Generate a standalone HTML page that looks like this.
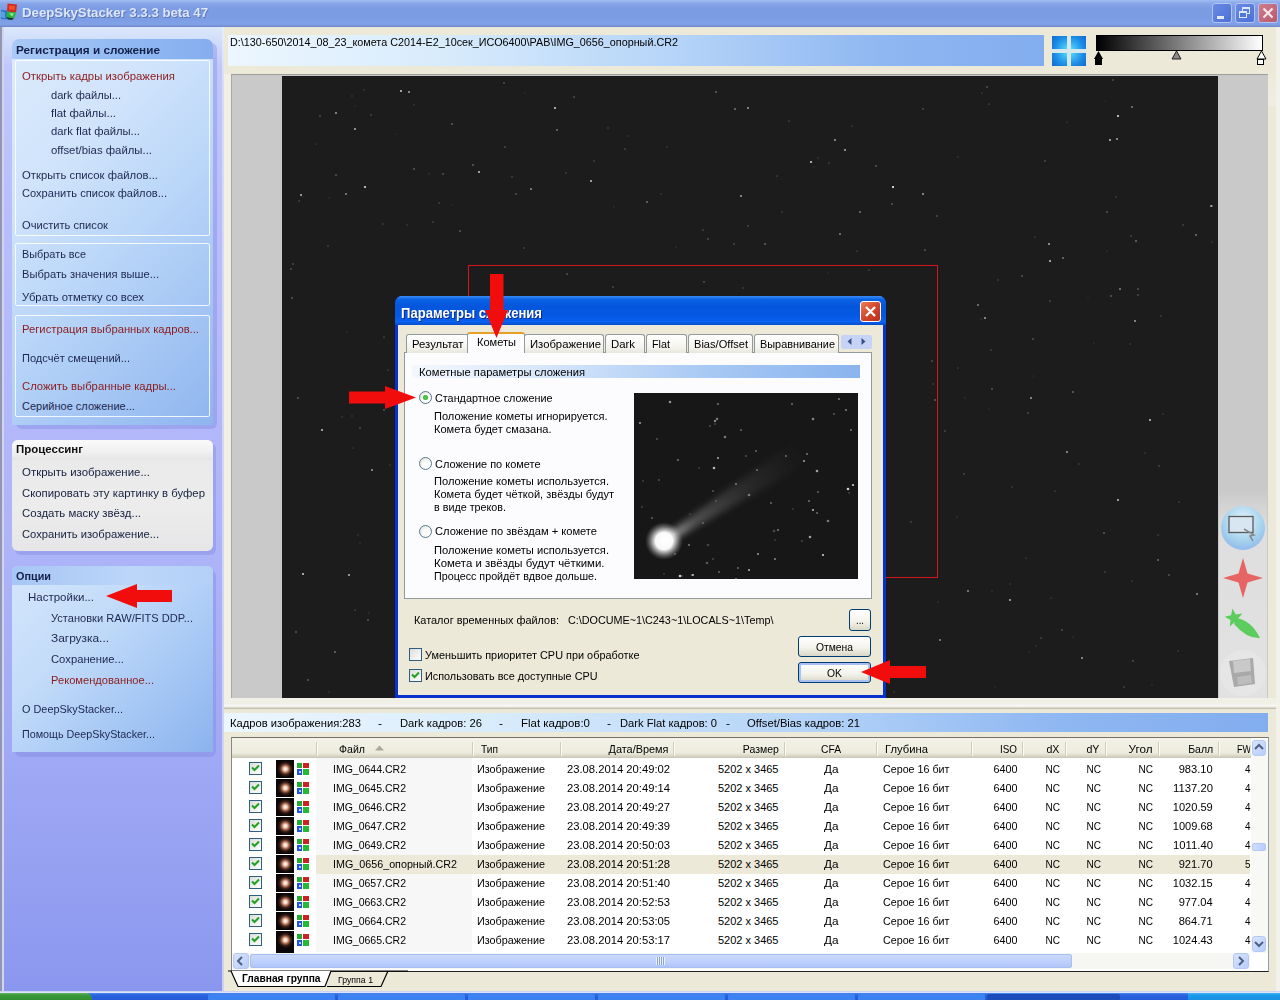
<!DOCTYPE html>
<html><head><meta charset="utf-8"><title>DeepSkyStacker</title><style>
*{box-sizing:border-box;margin:0;padding:0}
html,body{width:1280px;height:1000px;overflow:hidden;background:#ece9d8}
body{font-family:"Liberation Sans",sans-serif;font-size:11px;color:#000;position:relative}
.a{position:absolute}
.t{position:absolute;white-space:nowrap;transform-origin:0 50%}
#title{left:0;top:0;width:1280px;height:27px;background:linear-gradient(#a2bdf0 0,#8aa9ea 3px,#7c9ce4 8px,#7b9be3 18px,#80a1e8 23px,#7e9de2 25px,#6c84c6 27px)}
.wb{position:absolute;top:3px;width:20px;height:20px;border:1px solid #b4c4f0;border-radius:3px}
#side{left:0;top:27px;width:222px;height:966px;background:linear-gradient(#dbe8fb 0,#d3e0fa 10px,#c0c8fb 40px,#b8bdfb 200px,#aeb4f8 520px,#9fa8f4 740px,#909cf0 900px,#8b97ee 966px)}
.sb{position:absolute;left:15px;width:195px;border:1px solid rgba(255,255,255,.85);border-radius:2px}
</style></head><body>
<div class="a" id="title">
<svg class="a" style="left:0px;top:2px" width="20" height="20" viewBox="0 0 20 20"><path d="M1 8 L7 8.5 L8 17.5 L1 17Z" fill="#2a74c8"/><path d="M2 9.5v6M4 10v6" stroke="#7fd0f0" stroke-width="1"/><path d="M7.5 1.5 L17 2.5 L16 10.5 L7 9.5Z" fill="#d22a1e"/><path d="M9 3.5 L15 4 L14.5 8 L9 7.5Z" fill="#f0502a"/><path d="M7 9.5 L16 10.5 L14 16.5 L6.5 15Z" fill="#28b43a"/><path d="M9 11 L14 11.5 L12 14.5Z" fill="#8cf08c"/><path d="M6.5 15 L14 16.5 L12 18 L8 17.5Z" fill="#143a28"/></svg>
<div class="t" style="top:5.32px;font-size:13.5px;line-height:16px;height:16px;left:22px;transform:scaleX(0.9796);color:#dde6f8;font-weight:bold;text-shadow:1px 1px 0 #5a74b8;">DeepSkyStacker 3.3.3 beta 47</div>
<div class="wb" style="left:1212px;background:linear-gradient(135deg,#6a8ae4,#4a70d8)"><div class="a" style="left:4px;top:12px;width:7px;height:3px;background:#e4ebfb"></div></div>
<div class="wb" style="left:1235px;background:linear-gradient(135deg,#6a8ae4,#4a70d8)"><div class="a" style="left:6px;top:3px;width:8px;height:7px;border:1px solid #dfe7fa;border-top-width:2px"></div><div class="a" style="left:3px;top:7px;width:8px;height:7px;border:1px solid #dfe7fa;border-top-width:2px;background:#5277da"></div></div>
<div class="wb" style="left:1258px;background:linear-gradient(135deg,#cf7c8c,#b85a6c)"><svg class="a" style="left:3px;top:3px" width="12" height="12"><path d="M1.5 1.5L10.5 10.5M10.5 1.5L1.5 10.5" stroke="#f4e6ea" stroke-width="2.2"/></svg></div>
</div>
<div class="a" style="left:0px;top:27px;width:3px;height:966px;background:#8496de"></div>
<div class="a" style="left:1276px;top:27px;width:4px;height:966px;background:#f3f2ea"></div>
<div class="a" id="side"></div>
<div class="a" style="left:0px;top:27px;width:2px;height:966px;background:#9296b4"></div>
<div class="a" style="left:2px;top:27px;width:2px;height:966px;background:#d0d4ec"></div>
<div class="a" style="left:16px;top:43px;width:201px;height:386px;background:rgba(120,130,220,.35);border-radius:6px"></div>
<div class="a" style="left:12px;top:39px;width:201px;height:386px;border-radius:7px 7px 0 0;background:linear-gradient(135deg,#dcebfc 0,#cfe3fb 30%,#b4d2f7 60%,#8fb5ef 100%)"></div>
<div class="a" style="left:12px;top:39px;width:201px;height:20px;border-radius:7px 7px 0 0;background:linear-gradient(90deg,#a9c9f6,#8fb8f2 60%,#86aeee)"></div>
<div class="t" style="top:43.02px;font-size:11.5px;line-height:14px;height:14px;left:15.5px;transform:scaleX(1.0239);color:#14204a;font-weight:bold;">Регистрация и сложение</div>
<div class="sb" style="top:60px;height:176px"></div>
<div class="sb" style="top:243px;height:63px"></div>
<div class="sb" style="top:315px;height:102px"></div>
<div class="t" style="top:69.69px;font-size:11px;line-height:13px;height:13px;left:22px;transform:scaleX(1.0317);color:#8c1c1c;">Открыть кадры изображения</div>
<div class="t" style="top:88.69px;font-size:11px;line-height:13px;height:13px;left:51px;transform:scaleX(1.0106);color:#1d2750;">dark файлы...</div>
<div class="t" style="top:106.69px;font-size:11px;line-height:13px;height:13px;left:51px;transform:scaleX(1.0392);color:#1d2750;">flat файлы...</div>
<div class="t" style="top:124.69px;font-size:11px;line-height:13px;height:13px;left:51px;transform:scaleX(1.0230);color:#1d2750;">dark flat файлы...</div>
<div class="t" style="top:143.69px;font-size:11px;line-height:13px;height:13px;left:51px;transform:scaleX(1.0326);color:#1d2750;">offset/bias файлы...</div>
<div class="t" style="top:168.69px;font-size:11px;line-height:13px;height:13px;left:22px;transform:scaleX(1.0268);color:#1d2750;">Открыть список файлов...</div>
<div class="t" style="top:186.69px;font-size:11px;line-height:13px;height:13px;left:22px;transform:scaleX(1.0075);color:#1d2750;">Сохранить список файлов...</div>
<div class="t" style="top:218.69px;font-size:11px;line-height:13px;height:13px;left:22px;transform:scaleX(1.0105);color:#1d2750;">Очистить список</div>
<div class="t" style="top:247.69px;font-size:11px;line-height:13px;height:13px;left:22px;transform:scaleX(0.9891);color:#1d2750;">Выбрать все</div>
<div class="t" style="top:267.69px;font-size:11px;line-height:13px;height:13px;left:22px;transform:scaleX(1.0125);color:#1d2750;">Выбрать значения выше...</div>
<div class="t" style="top:290.69px;font-size:11px;line-height:13px;height:13px;left:22px;transform:scaleX(1.0249);color:#1d2750;">Убрать отметку со всех</div>
<div class="t" style="top:322.69px;font-size:11px;line-height:13px;height:13px;left:22px;transform:scaleX(1.0225);color:#8c1c1c;">Регистрация выбранных кадров...</div>
<div class="t" style="top:351.69px;font-size:11px;line-height:13px;height:13px;left:22px;transform:scaleX(1.0067);color:#1d2750;">Подсчёт смещений...</div>
<div class="t" style="top:379.69px;font-size:11px;line-height:13px;height:13px;left:22px;transform:scaleX(1.0259);color:#8c1c1c;">Сложить выбранные кадры...</div>
<div class="t" style="top:399.69px;font-size:11px;line-height:13px;height:13px;left:22px;color:#1d2750;">Серийное сложение...</div>
<div class="a" style="left:15px;top:443px;width:201px;height:112px;background:rgba(120,130,220,.35);border-radius:6px"></div>
<div class="a" style="left:12px;top:440px;width:201px;height:111px;border-radius:6px;background:linear-gradient(#e9e9ea,#ececec 60%,#e6e6e8)"></div>
<div class="a" style="left:12px;top:440px;width:201px;height:20px;border-radius:6px 6px 0 0;background:linear-gradient(#fafafa,#f0f0f0 60%,#e4e4e6)"></div>
<div class="t" style="top:442.02px;font-size:11.5px;line-height:14px;height:14px;left:15.5px;transform:scaleX(0.9965);color:#101010;font-weight:bold;">Процессинг</div>
<div class="t" style="top:465.69px;font-size:11px;line-height:13px;height:13px;left:22px;transform:scaleX(1.0409);color:#16213f;">Открыть изображение...</div>
<div class="t" style="top:486.69px;font-size:11px;line-height:13px;height:13px;left:22px;transform:scaleX(1.0323);color:#16213f;">Скопировать эту картинку в буфер</div>
<div class="t" style="top:506.69px;font-size:11px;line-height:13px;height:13px;left:22px;transform:scaleX(1.0353);color:#16213f;">Создать маску звёзд...</div>
<div class="t" style="top:527.69px;font-size:11px;line-height:13px;height:13px;left:22px;transform:scaleX(1.0192);color:#16213f;">Сохранить изображение...</div>
<div class="a" style="left:15px;top:570px;width:201px;height:187px;background:rgba(120,130,220,.35);border-radius:6px"></div>
<div class="a" style="left:12px;top:566px;width:201px;height:186px;border-radius:6px 6px 0 0;background:linear-gradient(135deg,#d4e6fb 0,#c4dcf9 35%,#a9caf5 65%,#8cb3ee 100%)"></div>
<div class="a" style="left:12px;top:566px;width:201px;height:19px;border-radius:6px 6px 0 0;background:linear-gradient(90deg,#a6c6f5,#bcd6f8 60%,#b4d0f7)"></div>
<div class="t" style="top:569.02px;font-size:11.5px;line-height:14px;height:14px;left:15.5px;transform:scaleX(0.9432);color:#14204a;font-weight:bold;">Опции</div>
<div class="t" style="top:590.69px;font-size:11px;line-height:13px;height:13px;left:28px;transform:scaleX(1.0458);color:#1d2750;">Настройки...</div>
<div class="t" style="top:611.69px;font-size:11px;line-height:13px;height:13px;left:51px;transform:scaleX(1.0070);color:#1d2750;">Установки RAW/FITS DDP...</div>
<div class="t" style="top:631.69px;font-size:11px;line-height:13px;height:13px;left:51px;transform:scaleX(1.0810);color:#1d2750;">Загрузка...</div>
<div class="t" style="top:652.69px;font-size:11px;line-height:13px;height:13px;left:51px;transform:scaleX(1.0228);color:#1d2750;">Сохранение...</div>
<div class="t" style="top:673.69px;font-size:11px;line-height:13px;height:13px;left:51px;transform:scaleX(1.0126);color:#8c1c1c;">Рекомендованное...</div>
<div class="t" style="top:702.69px;font-size:11px;line-height:13px;height:13px;left:22px;transform:scaleX(0.9891);color:#1d2750;">О DeepSkyStacker...</div>
<div class="t" style="top:727.69px;font-size:11px;line-height:13px;height:13px;left:22px;transform:scaleX(0.9777);color:#1d2750;">Помощь DeepSkyStacker...</div>
<svg class="a" style="left:104px;top:582px" width="72" height="28"><path d="M2 14 L33 2 L33 8 L68 8 L68 20 L33 20 L33 26 Z" fill="#f20d0d"/></svg>
<div class="a" style="left:222px;top:27px;width:2px;height:964px;background:linear-gradient(#e6eefb,#d6daf6 60px,#cdd0f2)"></div>
<div class="a" style="left:228px;top:35px;width:816px;height:31px;background:linear-gradient(90deg,#ecf6fe 0,#d9ecfc 25%,#b5d4f8 55%,#8fb7f1 80%,#82adef 100%)"></div>
<div class="t" style="top:35.69px;font-size:11px;line-height:13px;height:13px;left:230px;transform:scaleX(0.9810);">D:\130-650\2014_08_23_комета C2014-E2_10сек_ИСО6400\РАВ\IMG_0656_опорный.CR2</div>
<div class="a" style="left:1052px;top:36px;width:15px;height:13px;background:radial-gradient(circle at 100% 100%,#52d6fb,#1c8ce6 60%,#1268d0)"></div>
<div class="a" style="left:1071px;top:36px;width:15px;height:13px;background:radial-gradient(circle at 0 100%,#52d6fb,#1c8ce6 60%,#1268d0)"></div>
<div class="a" style="left:1052px;top:53px;width:15px;height:13px;background:radial-gradient(circle at 100% 0,#52d6fb,#1c8ce6 60%,#1268d0)"></div>
<div class="a" style="left:1071px;top:53px;width:15px;height:13px;background:radial-gradient(circle at 0 0,#52d6fb,#1c8ce6 60%,#1268d0)"></div>
<div class="a" style="left:1067px;top:36px;width:4px;height:30px;background:rgba(200,232,250,.6)"></div>
<div class="a" style="left:1052px;top:49px;width:34px;height:4px;background:rgba(200,232,250,.6)"></div>
<div class="a" style="left:1096px;top:35px;width:167px;height:16px;border:1px solid #000;background:linear-gradient(90deg,#000,#fff)"></div>
<svg class="a" style="left:1090px;top:50px" width="180" height="16"><path d="M8.5 1 L4 9 L13 9Z" fill="#000"/><rect x="5" y="9" width="7" height="6" fill="#000"/><path d="M86.5 1 L82 9 L91 9Z" fill="#888" stroke="#222" stroke-width="1"/><path d="M171.5 1 L167 9 L176 9Z" fill="#fff" stroke="#000" stroke-width="1"/><rect x="167.5" y="9.5" width="6" height="5" fill="#fff" stroke="#000" stroke-width="1"/></svg>
<div class="a" style="left:224px;top:66px;width:1052px;height:40px;background:linear-gradient(#ece9d8,#f0eee2)"></div>
<div class="a" style="left:224px;top:74px;width:8px;height:632px;background:#f2f0e5"></div>
<div class="a" style="left:224px;top:698px;width:1052px;height:8px;background:#f1f0e6"></div>
<div class="a" style="left:231px;top:74px;width:1037px;height:624px;background:#c9c9c9;border-top:1px solid #9d9d9d;border-left:1px solid #a8a8a8"></div>
<div class="a" style="left:282px;top:76px;width:936px;height:622px;background:#1c1c1c;overflow:hidden">
<svg class="a" style="left:0;top:0" width="936" height="623"><circle cx="119" cy="15" r="1.0" fill="#fff" opacity="0.80"/><circle cx="127" cy="16" r="1.0" fill="#fff" opacity="0.63"/><circle cx="54" cy="37" r="1.1" fill="#fff" opacity="0.53"/><circle cx="73" cy="53" r="1.1" fill="#fff" opacity="0.64"/><circle cx="273" cy="32" r="1.1" fill="#fff" opacity="0.77"/><circle cx="275" cy="54" r="0.8" fill="#fff" opacity="0.63"/><circle cx="191" cy="89" r="0.8" fill="#fff" opacity="0.49"/><circle cx="197" cy="96" r="1.1" fill="#fff" opacity="0.70"/><circle cx="83" cy="111" r="1.1" fill="#fff" opacity="0.84"/><circle cx="19" cy="119" r="1.0" fill="#fff" opacity="0.71"/><circle cx="309" cy="105" r="1.1" fill="#fff" opacity="0.71"/><circle cx="64" cy="118" r="1.1" fill="#fff" opacity="0.46"/><circle cx="249" cy="113" r="1.1" fill="#fff" opacity="0.48"/><circle cx="434" cy="16" r="0.8" fill="#fff" opacity="0.53"/><circle cx="453" cy="33" r="0.8" fill="#fff" opacity="0.69"/><circle cx="466" cy="32" r="1.0" fill="#fff" opacity="0.58"/><circle cx="529" cy="86" r="1.1" fill="#fff" opacity="0.79"/><circle cx="553" cy="64" r="1.1" fill="#fff" opacity="0.54"/><circle cx="563" cy="74" r="1.0" fill="#fff" opacity="0.65"/><circle cx="611" cy="111" r="1.1" fill="#fff" opacity="0.48"/><circle cx="641" cy="118" r="1.1" fill="#fff" opacity="0.56"/><circle cx="836" cy="40" r="1.1" fill="#fff" opacity="0.85"/><circle cx="850" cy="31" r="0.8" fill="#fff" opacity="0.73"/><circle cx="828" cy="64" r="1.0" fill="#fff" opacity="0.75"/><circle cx="459" cy="120" r="1.1" fill="#fff" opacity="0.57"/><circle cx="578" cy="136" r="0.8" fill="#fff" opacity="0.68"/><circle cx="365" cy="126" r="0.8" fill="#fff" opacity="0.61"/><circle cx="929" cy="130" r="1.0" fill="#fff" opacity="0.60"/><circle cx="558" cy="158" r="0.8" fill="#fff" opacity="0.79"/><circle cx="483" cy="168" r="0.8" fill="#fff" opacity="0.54"/><circle cx="854" cy="165" r="0.8" fill="#fff" opacity="0.64"/><circle cx="767" cy="168" r="1.1" fill="#fff" opacity="0.61"/><circle cx="781" cy="182" r="0.8" fill="#fff" opacity="0.68"/><circle cx="838" cy="213" r="0.8" fill="#fff" opacity="0.76"/><circle cx="853" cy="245" r="1.0" fill="#fff" opacity="0.58"/><circle cx="785" cy="376" r="1.0" fill="#fff" opacity="0.58"/><circle cx="836" cy="424" r="1.0" fill="#fff" opacity="0.75"/><circle cx="822" cy="457" r="0.8" fill="#fff" opacity="0.50"/><circle cx="686" cy="515" r="1.1" fill="#fff" opacity="0.49"/><circle cx="876" cy="484" r="0.8" fill="#fff" opacity="0.64"/><circle cx="915" cy="518" r="1.0" fill="#fff" opacity="0.52"/><circle cx="800" cy="582" r="1.1" fill="#fff" opacity="0.53"/><circle cx="90" cy="394" r="1.1" fill="#fff" opacity="0.53"/><circle cx="21" cy="498" r="1.1" fill="#fff" opacity="0.76"/><circle cx="67" cy="499" r="1.0" fill="#fff" opacity="0.71"/><circle cx="53" cy="576" r="0.8" fill="#fff" opacity="0.61"/><circle cx="86" cy="544" r="0.8" fill="#fff" opacity="0.45"/><circle cx="749" cy="322" r="1.1" fill="#fff" opacity="0.57"/><circle cx="791" cy="316" r="0.8" fill="#fff" opacity="0.53"/><circle cx="611" cy="111" r="1.0" fill="#fff" opacity="0.85"/><circle cx="768" cy="185" r="1.1" fill="#fff" opacity="0.71"/><circle cx="829" cy="220" r="0.8" fill="#fff" opacity="0.47"/><circle cx="930" cy="130" r="0.8" fill="#fff" opacity="0.54"/><circle cx="696" cy="229" r="1.0" fill="#fff" opacity="0.45"/><circle cx="703" cy="242" r="1.1" fill="#fff" opacity="0.58"/><circle cx="835" cy="63" r="1.0" fill="#fff" opacity="0.60"/><circle cx="16" cy="322" r="0.8" fill="#fff" opacity="0.49"/><circle cx="40" cy="354" r="1.1" fill="#fff" opacity="0.70"/><circle cx="914" cy="159" r="0.8" fill="#fff" opacity="0.69"/><circle cx="728" cy="524" r="1.0" fill="#fff" opacity="0.70"/><circle cx="658" cy="564" r="0.8" fill="#fff" opacity="0.83"/><circle cx="868" cy="344" r="1.0" fill="#fff" opacity="0.78"/><circle cx="587" cy="194" r="0.6" fill="#fff" opacity="0.44"/><circle cx="234" cy="118" r="0.8" fill="#fff" opacity="0.37"/><circle cx="73" cy="30" r="0.6" fill="#fff" opacity="0.16"/><circle cx="901" cy="149" r="0.8" fill="#fff" opacity="0.29"/><circle cx="870" cy="609" r="0.6" fill="#fff" opacity="0.23"/><circle cx="575" cy="175" r="0.6" fill="#fff" opacity="0.41"/><circle cx="65" cy="256" r="0.6" fill="#fff" opacity="0.17"/><circle cx="536" cy="82" r="0.7" fill="#fff" opacity="0.20"/><circle cx="422" cy="206" r="0.8" fill="#fff" opacity="0.39"/><circle cx="547" cy="87" r="0.6" fill="#fff" opacity="0.47"/><circle cx="292" cy="21" r="0.8" fill="#fff" opacity="0.37"/><circle cx="70" cy="340" r="0.8" fill="#fff" opacity="0.17"/><circle cx="876" cy="459" r="0.6" fill="#fff" opacity="0.43"/><circle cx="856" cy="219" r="0.8" fill="#fff" opacity="0.32"/><circle cx="73" cy="534" r="0.6" fill="#fff" opacity="0.45"/><circle cx="570" cy="50" r="0.8" fill="#fff" opacity="0.19"/><circle cx="650" cy="285" r="0.7" fill="#fff" opacity="0.44"/><circle cx="78" cy="467" r="0.6" fill="#fff" opacity="0.26"/><circle cx="82" cy="14" r="0.8" fill="#fff" opacity="0.19"/><circle cx="730" cy="411" r="0.7" fill="#fff" opacity="0.24"/><circle cx="11" cy="188" r="0.8" fill="#fff" opacity="0.36"/><circle cx="466" cy="150" r="0.7" fill="#fff" opacity="0.38"/><circle cx="754" cy="570" r="0.6" fill="#fff" opacity="0.28"/><circle cx="546" cy="197" r="0.6" fill="#fff" opacity="0.20"/><circle cx="38" cy="40" r="0.7" fill="#fff" opacity="0.44"/><circle cx="106" cy="294" r="0.6" fill="#fff" opacity="0.44"/><circle cx="629" cy="446" r="0.8" fill="#fff" opacity="0.31"/><circle cx="70" cy="20" r="0.8" fill="#fff" opacity="0.16"/><circle cx="663" cy="355" r="0.7" fill="#fff" opacity="0.38"/><circle cx="379" cy="118" r="0.7" fill="#fff" opacity="0.23"/><circle cx="132" cy="29" r="0.8" fill="#fff" opacity="0.19"/><circle cx="102" cy="334" r="0.8" fill="#fff" opacity="0.43"/><circle cx="897" cy="426" r="0.6" fill="#fff" opacity="0.44"/><circle cx="707" cy="333" r="0.6" fill="#fff" opacity="0.21"/><circle cx="653" cy="324" r="0.8" fill="#fff" opacity="0.50"/><circle cx="655" cy="140" r="0.7" fill="#fff" opacity="0.48"/><circle cx="676" cy="81" r="0.7" fill="#fff" opacity="0.22"/><circle cx="831" cy="4" r="0.8" fill="#fff" opacity="0.35"/><circle cx="823" cy="496" r="0.7" fill="#fff" opacity="0.31"/><circle cx="610" cy="128" r="0.8" fill="#fff" opacity="0.45"/><circle cx="747" cy="576" r="0.6" fill="#fff" opacity="0.22"/><circle cx="842" cy="611" r="0.7" fill="#fff" opacity="0.34"/><circle cx="740" cy="200" r="0.8" fill="#fff" opacity="0.45"/><circle cx="326" cy="52" r="0.7" fill="#fff" opacity="0.27"/><circle cx="394" cy="171" r="0.6" fill="#fff" opacity="0.23"/><circle cx="812" cy="267" r="0.6" fill="#fff" opacity="0.21"/><circle cx="132" cy="93" r="0.8" fill="#fff" opacity="0.47"/><circle cx="709" cy="274" r="0.8" fill="#fff" opacity="0.25"/><circle cx="682" cy="398" r="0.8" fill="#fff" opacity="0.33"/><circle cx="849" cy="160" r="0.8" fill="#fff" opacity="0.28"/><circle cx="791" cy="561" r="0.6" fill="#fff" opacity="0.26"/><circle cx="385" cy="71" r="0.6" fill="#fff" opacity="0.36"/><circle cx="26" cy="604" r="0.8" fill="#fff" opacity="0.47"/><circle cx="114" cy="58" r="0.6" fill="#fff" opacity="0.17"/><circle cx="896" cy="575" r="0.7" fill="#fff" opacity="0.24"/><circle cx="461" cy="212" r="0.7" fill="#fff" opacity="0.33"/><circle cx="102" cy="261" r="0.6" fill="#fff" opacity="0.47"/><circle cx="21" cy="121" r="0.6" fill="#fff" opacity="0.15"/><circle cx="797" cy="388" r="0.8" fill="#fff" opacity="0.22"/><circle cx="495" cy="100" r="0.6" fill="#fff" opacity="0.45"/><circle cx="500" cy="136" r="0.6" fill="#fff" opacity="0.45"/><circle cx="759" cy="562" r="0.7" fill="#fff" opacity="0.36"/><circle cx="834" cy="121" r="0.6" fill="#fff" opacity="0.46"/><circle cx="125" cy="149" r="0.8" fill="#fff" opacity="0.18"/><circle cx="881" cy="338" r="0.8" fill="#fff" opacity="0.19"/><circle cx="17" cy="125" r="0.8" fill="#fff" opacity="0.28"/><circle cx="768" cy="225" r="0.8" fill="#fff" opacity="0.33"/><circle cx="710" cy="313" r="0.8" fill="#fff" opacity="0.44"/><circle cx="751" cy="300" r="0.6" fill="#fff" opacity="0.16"/><circle cx="532" cy="91" r="0.6" fill="#fff" opacity="0.19"/><circle cx="161" cy="98" r="0.7" fill="#fff" opacity="0.47"/><circle cx="89" cy="39" r="0.8" fill="#fff" opacity="0.31"/><circle cx="716" cy="204" r="0.7" fill="#fff" opacity="0.30"/><circle cx="332" cy="131" r="0.7" fill="#fff" opacity="0.15"/><circle cx="656" cy="526" r="0.6" fill="#fff" opacity="0.29"/><circle cx="863" cy="377" r="0.6" fill="#fff" opacity="0.33"/><circle cx="14" cy="556" r="0.8" fill="#fff" opacity="0.46"/><circle cx="851" cy="585" r="0.8" fill="#fff" opacity="0.36"/><circle cx="753" cy="161" r="0.6" fill="#fff" opacity="0.41"/><circle cx="728" cy="508" r="0.7" fill="#fff" opacity="0.20"/><circle cx="170" cy="129" r="0.6" fill="#fff" opacity="0.17"/><circle cx="10" cy="222" r="0.8" fill="#fff" opacity="0.47"/><circle cx="46" cy="170" r="0.8" fill="#fff" opacity="0.25"/><circle cx="170" cy="48" r="0.8" fill="#fff" opacity="0.50"/><circle cx="713" cy="611" r="0.6" fill="#fff" opacity="0.19"/><circle cx="101" cy="148" r="0.7" fill="#fff" opacity="0.29"/><circle cx="47" cy="122" r="0.7" fill="#fff" opacity="0.15"/><circle cx="242" cy="172" r="0.7" fill="#fff" opacity="0.34"/><circle cx="71" cy="372" r="0.6" fill="#fff" opacity="0.29"/><circle cx="879" cy="240" r="0.6" fill="#fff" opacity="0.45"/><circle cx="452" cy="168" r="0.7" fill="#fff" opacity="0.38"/><circle cx="700" cy="17" r="0.6" fill="#fff" opacity="0.36"/><circle cx="641" cy="33" r="0.7" fill="#fff" opacity="0.41"/><circle cx="47" cy="616" r="0.7" fill="#fff" opacity="0.18"/><circle cx="848" cy="268" r="0.7" fill="#fff" opacity="0.24"/><circle cx="707" cy="28" r="0.6" fill="#fff" opacity="0.48"/><circle cx="676" cy="292" r="0.6" fill="#fff" opacity="0.36"/><circle cx="108" cy="389" r="0.7" fill="#fff" opacity="0.19"/><circle cx="806" cy="222" r="0.6" fill="#fff" opacity="0.19"/><circle cx="426" cy="163" r="0.8" fill="#fff" opacity="0.39"/><circle cx="763" cy="85" r="0.7" fill="#fff" opacity="0.41"/><circle cx="223" cy="71" r="0.7" fill="#fff" opacity="0.42"/><circle cx="178" cy="155" r="0.8" fill="#fff" opacity="0.47"/><circle cx="823" cy="25" r="0.6" fill="#fff" opacity="0.15"/><circle cx="243" cy="17" r="0.6" fill="#fff" opacity="0.19"/><circle cx="507" cy="45" r="0.6" fill="#fff" opacity="0.47"/><circle cx="151" cy="146" r="0.7" fill="#fff" opacity="0.32"/><circle cx="331" cy="211" r="0.7" fill="#fff" opacity="0.41"/><circle cx="785" cy="46" r="0.6" fill="#fff" opacity="0.31"/><circle cx="769" cy="522" r="0.6" fill="#fff" opacity="0.31"/><circle cx="699" cy="243" r="0.6" fill="#fff" opacity="0.28"/><circle cx="612" cy="616" r="0.7" fill="#fff" opacity="0.25"/><circle cx="710" cy="515" r="0.6" fill="#fff" opacity="0.30"/><circle cx="346" cy="60" r="0.7" fill="#fff" opacity="0.18"/><circle cx="78" cy="352" r="0.7" fill="#fff" opacity="0.44"/><circle cx="9" cy="193" r="0.8" fill="#fff" opacity="0.36"/><circle cx="651" cy="308" r="0.8" fill="#fff" opacity="0.26"/><circle cx="825" cy="136" r="0.8" fill="#fff" opacity="0.40"/><circle cx="343" cy="73" r="0.8" fill="#fff" opacity="0.30"/><circle cx="643" cy="174" r="0.8" fill="#fff" opacity="0.43"/><circle cx="285" cy="198" r="0.7" fill="#fff" opacity="0.49"/><circle cx="683" cy="322" r="0.6" fill="#fff" opacity="0.28"/><circle cx="746" cy="337" r="0.8" fill="#fff" opacity="0.35"/><circle cx="825" cy="175" r="0.6" fill="#fff" opacity="0.23"/><circle cx="54" cy="99" r="0.7" fill="#fff" opacity="0.49"/><circle cx="60" cy="341" r="0.8" fill="#fff" opacity="0.18"/><circle cx="76" cy="459" r="0.7" fill="#fff" opacity="0.18"/><circle cx="594" cy="90" r="0.8" fill="#fff" opacity="0.44"/><circle cx="312" cy="85" r="0.7" fill="#fff" opacity="0.34"/><circle cx="675" cy="441" r="0.6" fill="#fff" opacity="0.29"/><circle cx="773" cy="415" r="0.6" fill="#fff" opacity="0.43"/><circle cx="780" cy="554" r="0.8" fill="#fff" opacity="0.37"/><circle cx="751" cy="263" r="0.7" fill="#fff" opacity="0.47"/><circle cx="230" cy="101" r="0.8" fill="#fff" opacity="0.28"/><circle cx="157" cy="127" r="0.7" fill="#fff" opacity="0.34"/><circle cx="284" cy="97" r="0.6" fill="#fff" opacity="0.47"/><circle cx="705" cy="11" r="0.7" fill="#fff" opacity="0.47"/><circle cx="34" cy="68" r="0.6" fill="#fff" opacity="0.28"/><circle cx="877" cy="390" r="0.8" fill="#fff" opacity="0.32"/><circle cx="856" cy="213" r="0.8" fill="#fff" opacity="0.42"/><circle cx="87" cy="537" r="0.7" fill="#fff" opacity="0.17"/><circle cx="887" cy="499" r="0.7" fill="#fff" opacity="0.49"/><circle cx="744" cy="482" r="0.6" fill="#fff" opacity="0.38"/><circle cx="222" cy="7" r="0.7" fill="#fff" opacity="0.47"/><circle cx="421" cy="154" r="0.7" fill="#fff" opacity="0.36"/><circle cx="147" cy="98" r="0.7" fill="#fff" opacity="0.20"/><circle cx="850" cy="505" r="0.6" fill="#fff" opacity="0.37"/><circle cx="930" cy="166" r="0.8" fill="#fff" opacity="0.17"/></svg>
</div>
<div class="a" style="left:468px;top:265px;width:470px;height:313px;border:1px solid #d81420"></div>
<div class="a" style="left:1219px;top:490px;width:48px;height:208px;background:linear-gradient(#c9c9c9,#d2d2d2 14px,#dedede 40px,#e2e2e2)"></div>
<svg class="a" style="left:1220px;top:503px" width="47" height="197"><defs><radialGradient id="g1" cx=".5" cy=".35" r=".7"><stop offset="0" stop-color="#e8f6fc"/><stop offset=".6" stop-color="#a9d4ee"/><stop offset="1" stop-color="#8cb6ea"/></radialGradient></defs><circle cx="23" cy="25" r="22" fill="url(#g1)"/><rect x="9" y="13.5" width="24" height="16" fill="#d8e6f2" stroke="#5a5a5a" stroke-width="1.3"/><path d="M24 26l10 6-4 1 3 5" stroke="#888" stroke-width="1.5" fill="none"/><path d="M23 55 L27.5 70.5 L43 75 L27.5 79.5 L23 95 L18.5 79.5 L3 75 L18.5 70.5Z" fill="#e66464"/><path d="M12.4 105.6 L15.8 111.4 L22.4 110.5 L18.0 115.6 L20.8 121.6 L14.7 118.9 L9.8 123.5 L10.5 116.9 L4.6 113.7 L11.1 112.2Z" fill="#5ccc5c"/><path d="M16 115 Q31 117 40 135 Q27 136 14 121Z" fill="#5ccc5c"/><circle cx="23" cy="170" r="23" fill="#e6e6e6"/><path d="M9 158 L33 155 L35 181 L14 184Z" fill="#a9a9a9"/><path d="M13 158 L30 156 L31 168 L14 170Z" fill="#c9c9c9"/><path d="M17 174 L31 172 L32 180 L18 182Z" fill="#bdbdbd"/></svg>
<div class="a" style="left:224px;top:704px;width:1052px;height:7px;background:linear-gradient(#f1f0e6,#f8fbfb 25%,#e8e6d8 45%,#bebcac 62%,#ece9d8 80%)"></div>
<div class="a" style="left:224px;top:713px;width:1044px;height:19px;background:linear-gradient(90deg,#ecf6fe 0,#d9ecfc 25%,#b5d4f8 55%,#8fb7f1 80%,#82adef 100%)"></div>
<div class="t" style="top:716.69px;font-size:11px;line-height:13px;height:13px;left:230px;transform:scaleX(1.0166);">Кадров изображения:283</div>
<div class="t" style="top:716.69px;font-size:11px;line-height:13px;height:13px;left:378px;transform:scaleX(1.0894);">-</div>
<div class="t" style="top:716.69px;font-size:11px;line-height:13px;height:13px;left:400px;transform:scaleX(1.0210);">Dark кадров: 26</div>
<div class="t" style="top:716.69px;font-size:11px;line-height:13px;height:13px;left:499px;transform:scaleX(1.0894);">-</div>
<div class="t" style="top:716.69px;font-size:11px;line-height:13px;height:13px;left:521px;transform:scaleX(1.0415);">Flat кадров:0</div>
<div class="t" style="top:716.69px;font-size:11px;line-height:13px;height:13px;left:607px;transform:scaleX(1.0894);">-</div>
<div class="t" style="top:716.69px;font-size:11px;line-height:13px;height:13px;left:620px;transform:scaleX(1.0149);">Dark Flat кадров: 0</div>
<div class="t" style="top:716.69px;font-size:11px;line-height:13px;height:13px;left:726px;transform:scaleX(1.0894);">-</div>
<div class="t" style="top:716.69px;font-size:11px;line-height:13px;height:13px;left:747px;transform:scaleX(1.0210);">Offset/Bias кадров: 21</div>
<div class="a" style="left:231px;top:737px;width:1038px;height:235px;background:#fff;border:1px solid #8f9fb0;border-top:1px solid #76746a;border-bottom:1px solid #222;border-left:1px solid #888"></div>
<div class="a" style="left:232px;top:738px;width:1019px;height:20px;background:linear-gradient(#f4f3ea,#ecebdc 75%,#d6d2c2 92%,#c8c4b4)"></div>
<div class="a" style="left:316px;top:758px;width:156px;height:194px;background:#f7f7f7"></div>
<div class="a" style="left:316px;top:855px;width:934px;height:19px;background:#ece9d8"></div>
<div class="a" style="left:316px;top:742px;width:2px;height:14px;border-left:1px solid #cfccbc;border-right:1px solid #fbfaf4"></div>
<div class="a" style="left:472px;top:742px;width:2px;height:14px;border-left:1px solid #cfccbc;border-right:1px solid #fbfaf4"></div>
<div class="a" style="left:560px;top:742px;width:2px;height:14px;border-left:1px solid #cfccbc;border-right:1px solid #fbfaf4"></div>
<div class="a" style="left:673px;top:742px;width:2px;height:14px;border-left:1px solid #cfccbc;border-right:1px solid #fbfaf4"></div>
<div class="a" style="left:784px;top:742px;width:2px;height:14px;border-left:1px solid #cfccbc;border-right:1px solid #fbfaf4"></div>
<div class="a" style="left:876px;top:742px;width:2px;height:14px;border-left:1px solid #cfccbc;border-right:1px solid #fbfaf4"></div>
<div class="a" style="left:971px;top:742px;width:2px;height:14px;border-left:1px solid #cfccbc;border-right:1px solid #fbfaf4"></div>
<div class="a" style="left:1022px;top:742px;width:2px;height:14px;border-left:1px solid #cfccbc;border-right:1px solid #fbfaf4"></div>
<div class="a" style="left:1065px;top:742px;width:2px;height:14px;border-left:1px solid #cfccbc;border-right:1px solid #fbfaf4"></div>
<div class="a" style="left:1105px;top:742px;width:2px;height:14px;border-left:1px solid #cfccbc;border-right:1px solid #fbfaf4"></div>
<div class="a" style="left:1158px;top:742px;width:2px;height:14px;border-left:1px solid #cfccbc;border-right:1px solid #fbfaf4"></div>
<div class="a" style="left:1218px;top:742px;width:2px;height:14px;border-left:1px solid #cfccbc;border-right:1px solid #fbfaf4"></div>
<div class="t" style="top:742.69px;font-size:11px;line-height:13px;height:13px;left:339px;transform:scaleX(0.9613);">Файл</div>
<svg class="a" style="left:375px;top:745px" width="10" height="6"><path d="M0 5.5L4.5 0.5L9 5.5Z" fill="#aca899"/></svg>
<div class="t" style="top:742.69px;font-size:11px;line-height:13px;height:13px;left:480.5px;transform:scaleX(0.9267);">Тип</div>
<div class="t" style="top:742.69px;font-size:11px;line-height:13px;height:13px;right:611px;transform-origin:100% 50%;transform:scaleX(0.9915);">Дата/Время</div>
<div class="t" style="top:742.69px;font-size:11px;line-height:13px;height:13px;right:501.5px;transform-origin:100% 50%;transform:scaleX(0.9521);">Размер</div>
<div class="t" style="top:742.69px;font-size:11px;line-height:13px;height:13px;left:821px;transform:scaleX(0.9343);">CFA</div>
<div class="t" style="top:742.69px;font-size:11px;line-height:13px;height:13px;left:884.5px;transform:scaleX(1.0230);">Глубина</div>
<div class="t" style="top:742.69px;font-size:11px;line-height:13px;height:13px;right:263px;transform-origin:100% 50%;transform:scaleX(0.8969);">ISO</div>
<div class="t" style="top:742.69px;font-size:11px;line-height:13px;height:13px;right:220.5px;transform-origin:100% 50%;transform:scaleX(0.9652);">dX</div>
<div class="t" style="top:742.69px;font-size:11px;line-height:13px;height:13px;right:180.5px;transform-origin:100% 50%;transform:scaleX(0.9652);">dY</div>
<div class="t" style="top:742.69px;font-size:11px;line-height:13px;height:13px;right:127px;transform-origin:100% 50%;transform:scaleX(1.0637);">Угол</div>
<div class="t" style="top:742.69px;font-size:11px;line-height:13px;height:13px;right:67px;transform-origin:100% 50%;transform:scaleX(0.9547);">Балл</div>
<div class="t" style="top:742.69px;font-size:11px;line-height:13px;height:13px;left:1237px;transform:scaleX(0.8183);clip-path:inset(0 1px 0 0);">FW</div>
<div class="a" style="left:249px;top:762px;width:13px;height:13px;border:1px solid #2f5f80;background:linear-gradient(135deg,#dcdcd7,#fff)"><svg class="a" style="left:1px;top:1px" width="9" height="9"><path d="M1 3.5L3.5 6L8 1.5" stroke="#21a121" stroke-width="2" fill="none"/></svg></div>
<div class="a" style="left:276px;top:759.5px;width:18px;height:18px;background:radial-gradient(circle at 52% 50%,#fff 0,#f6d2bc 14%,#a86a52 28%,#3a1e16 44%,#0c0707 62%)"></div>
<div class="a" style="left:297px;top:762.5px;width:12px;height:12px;background:#fff"><i class="a" style="left:0;top:0;width:5px;height:5px;background:#22aa33"></i><i class="a" style="left:6px;top:0;width:6px;height:5px;background:#cc2222"></i><i class="a" style="left:0;top:6px;width:5px;height:6px;background:#2255dd"></i><i class="a" style="left:6px;top:6px;width:6px;height:6px;background:#22bb33"></i><i class="a" style="left:1.5px;top:8px;width:2.5px;height:2.5px;background:#bcd4ff"></i></div>
<div class="t" style="top:762.69px;font-size:11px;line-height:13px;height:13px;left:333px;transform:scaleX(0.9550);">IMG_0644.CR2</div>
<div class="t" style="top:762.69px;font-size:11px;line-height:13px;height:13px;left:476.5px;transform:scaleX(0.9813);">Изображение</div>
<div class="t" style="top:762.69px;font-size:11px;line-height:13px;height:13px;left:566.5px;transform:scaleX(1.0204);">23.08.2014 20:49:02</div>
<div class="t" style="top:762.69px;font-size:11px;line-height:13px;height:13px;right:501.5px;transform-origin:100% 50%;">5202 x 3465</div>
<div class="t" style="top:762.69px;font-size:11px;line-height:13px;height:13px;left:823.5px;transform:scaleX(1.0679);">Да</div>
<div class="t" style="top:762.69px;font-size:11px;line-height:13px;height:13px;left:882.5px;transform:scaleX(0.9744);">Серое 16 бит</div>
<div class="t" style="top:762.69px;font-size:11px;line-height:13px;height:13px;right:262.5px;transform-origin:100% 50%;transform:scaleX(0.9802);">6400</div>
<div class="t" style="top:762.69px;font-size:11px;line-height:13px;height:13px;right:220px;transform-origin:100% 50%;transform:scaleX(0.9125);">NC</div>
<div class="t" style="top:762.69px;font-size:11px;line-height:13px;height:13px;right:179px;transform-origin:100% 50%;transform:scaleX(0.9125);">NC</div>
<div class="t" style="top:762.69px;font-size:11px;line-height:13px;height:13px;right:127px;transform-origin:100% 50%;transform:scaleX(0.9125);">NC</div>
<div class="t" style="top:762.69px;font-size:11px;line-height:13px;height:13px;right:67px;transform-origin:100% 50%;transform:scaleX(1.0102);">983.10</div>
<div class="t" style="top:762.69px;font-size:11px;line-height:13px;height:13px;left:1245px;transform:scaleX(0.8980);">4</div>
<div class="a" style="left:249px;top:781px;width:13px;height:13px;border:1px solid #2f5f80;background:linear-gradient(135deg,#dcdcd7,#fff)"><svg class="a" style="left:1px;top:1px" width="9" height="9"><path d="M1 3.5L3.5 6L8 1.5" stroke="#21a121" stroke-width="2" fill="none"/></svg></div>
<div class="a" style="left:276px;top:778.5px;width:18px;height:18px;background:radial-gradient(circle at 52% 50%,#fff 0,#f6d2bc 14%,#a86a52 28%,#3a1e16 44%,#0c0707 62%)"></div>
<div class="a" style="left:297px;top:781.5px;width:12px;height:12px;background:#fff"><i class="a" style="left:0;top:0;width:5px;height:5px;background:#22aa33"></i><i class="a" style="left:6px;top:0;width:6px;height:5px;background:#cc2222"></i><i class="a" style="left:0;top:6px;width:5px;height:6px;background:#2255dd"></i><i class="a" style="left:6px;top:6px;width:6px;height:6px;background:#22bb33"></i><i class="a" style="left:1.5px;top:8px;width:2.5px;height:2.5px;background:#bcd4ff"></i></div>
<div class="t" style="top:781.69px;font-size:11px;line-height:13px;height:13px;left:333px;transform:scaleX(0.9550);">IMG_0645.CR2</div>
<div class="t" style="top:781.69px;font-size:11px;line-height:13px;height:13px;left:476.5px;transform:scaleX(0.9813);">Изображение</div>
<div class="t" style="top:781.69px;font-size:11px;line-height:13px;height:13px;left:566.5px;transform:scaleX(1.0204);">23.08.2014 20:49:14</div>
<div class="t" style="top:781.69px;font-size:11px;line-height:13px;height:13px;right:501.5px;transform-origin:100% 50%;">5202 x 3465</div>
<div class="t" style="top:781.69px;font-size:11px;line-height:13px;height:13px;left:823.5px;transform:scaleX(1.0679);">Да</div>
<div class="t" style="top:781.69px;font-size:11px;line-height:13px;height:13px;left:882.5px;transform:scaleX(0.9744);">Серое 16 бит</div>
<div class="t" style="top:781.69px;font-size:11px;line-height:13px;height:13px;right:262.5px;transform-origin:100% 50%;transform:scaleX(0.9802);">6400</div>
<div class="t" style="top:781.69px;font-size:11px;line-height:13px;height:13px;right:220px;transform-origin:100% 50%;transform:scaleX(0.9125);">NC</div>
<div class="t" style="top:781.69px;font-size:11px;line-height:13px;height:13px;right:179px;transform-origin:100% 50%;transform:scaleX(0.9125);">NC</div>
<div class="t" style="top:781.69px;font-size:11px;line-height:13px;height:13px;right:127px;transform-origin:100% 50%;transform:scaleX(0.9125);">NC</div>
<div class="t" style="top:781.69px;font-size:11px;line-height:13px;height:13px;right:67px;transform-origin:100% 50%;transform:scaleX(1.0269);">1137.20</div>
<div class="t" style="top:781.69px;font-size:11px;line-height:13px;height:13px;left:1245px;transform:scaleX(0.8980);">4</div>
<div class="a" style="left:249px;top:800px;width:13px;height:13px;border:1px solid #2f5f80;background:linear-gradient(135deg,#dcdcd7,#fff)"><svg class="a" style="left:1px;top:1px" width="9" height="9"><path d="M1 3.5L3.5 6L8 1.5" stroke="#21a121" stroke-width="2" fill="none"/></svg></div>
<div class="a" style="left:276px;top:797.5px;width:18px;height:18px;background:radial-gradient(circle at 52% 50%,#fff 0,#f6d2bc 14%,#a86a52 28%,#3a1e16 44%,#0c0707 62%)"></div>
<div class="a" style="left:297px;top:800.5px;width:12px;height:12px;background:#fff"><i class="a" style="left:0;top:0;width:5px;height:5px;background:#22aa33"></i><i class="a" style="left:6px;top:0;width:6px;height:5px;background:#cc2222"></i><i class="a" style="left:0;top:6px;width:5px;height:6px;background:#2255dd"></i><i class="a" style="left:6px;top:6px;width:6px;height:6px;background:#22bb33"></i><i class="a" style="left:1.5px;top:8px;width:2.5px;height:2.5px;background:#bcd4ff"></i></div>
<div class="t" style="top:800.69px;font-size:11px;line-height:13px;height:13px;left:333px;transform:scaleX(0.9550);">IMG_0646.CR2</div>
<div class="t" style="top:800.69px;font-size:11px;line-height:13px;height:13px;left:476.5px;transform:scaleX(0.9813);">Изображение</div>
<div class="t" style="top:800.69px;font-size:11px;line-height:13px;height:13px;left:566.5px;transform:scaleX(1.0204);">23.08.2014 20:49:27</div>
<div class="t" style="top:800.69px;font-size:11px;line-height:13px;height:13px;right:501.5px;transform-origin:100% 50%;">5202 x 3465</div>
<div class="t" style="top:800.69px;font-size:11px;line-height:13px;height:13px;left:823.5px;transform:scaleX(1.0679);">Да</div>
<div class="t" style="top:800.69px;font-size:11px;line-height:13px;height:13px;left:882.5px;transform:scaleX(0.9744);">Серое 16 бит</div>
<div class="t" style="top:800.69px;font-size:11px;line-height:13px;height:13px;right:262.5px;transform-origin:100% 50%;transform:scaleX(0.9802);">6400</div>
<div class="t" style="top:800.69px;font-size:11px;line-height:13px;height:13px;right:220px;transform-origin:100% 50%;transform:scaleX(0.9125);">NC</div>
<div class="t" style="top:800.69px;font-size:11px;line-height:13px;height:13px;right:179px;transform-origin:100% 50%;transform:scaleX(0.9125);">NC</div>
<div class="t" style="top:800.69px;font-size:11px;line-height:13px;height:13px;right:127px;transform-origin:100% 50%;transform:scaleX(0.9125);">NC</div>
<div class="t" style="top:800.69px;font-size:11px;line-height:13px;height:13px;right:67px;transform-origin:100% 50%;transform:scaleX(1.0059);">1020.59</div>
<div class="t" style="top:800.69px;font-size:11px;line-height:13px;height:13px;left:1245px;transform:scaleX(0.8980);">4</div>
<div class="a" style="left:249px;top:819px;width:13px;height:13px;border:1px solid #2f5f80;background:linear-gradient(135deg,#dcdcd7,#fff)"><svg class="a" style="left:1px;top:1px" width="9" height="9"><path d="M1 3.5L3.5 6L8 1.5" stroke="#21a121" stroke-width="2" fill="none"/></svg></div>
<div class="a" style="left:276px;top:816.5px;width:18px;height:18px;background:radial-gradient(circle at 52% 50%,#fff 0,#f6d2bc 14%,#a86a52 28%,#3a1e16 44%,#0c0707 62%)"></div>
<div class="a" style="left:297px;top:819.5px;width:12px;height:12px;background:#fff"><i class="a" style="left:0;top:0;width:5px;height:5px;background:#22aa33"></i><i class="a" style="left:6px;top:0;width:6px;height:5px;background:#cc2222"></i><i class="a" style="left:0;top:6px;width:5px;height:6px;background:#2255dd"></i><i class="a" style="left:6px;top:6px;width:6px;height:6px;background:#22bb33"></i><i class="a" style="left:1.5px;top:8px;width:2.5px;height:2.5px;background:#bcd4ff"></i></div>
<div class="t" style="top:819.69px;font-size:11px;line-height:13px;height:13px;left:333px;transform:scaleX(0.9550);">IMG_0647.CR2</div>
<div class="t" style="top:819.69px;font-size:11px;line-height:13px;height:13px;left:476.5px;transform:scaleX(0.9813);">Изображение</div>
<div class="t" style="top:819.69px;font-size:11px;line-height:13px;height:13px;left:566.5px;transform:scaleX(1.0204);">23.08.2014 20:49:39</div>
<div class="t" style="top:819.69px;font-size:11px;line-height:13px;height:13px;right:501.5px;transform-origin:100% 50%;">5202 x 3465</div>
<div class="t" style="top:819.69px;font-size:11px;line-height:13px;height:13px;left:823.5px;transform:scaleX(1.0679);">Да</div>
<div class="t" style="top:819.69px;font-size:11px;line-height:13px;height:13px;left:882.5px;transform:scaleX(0.9744);">Серое 16 бит</div>
<div class="t" style="top:819.69px;font-size:11px;line-height:13px;height:13px;right:262.5px;transform-origin:100% 50%;transform:scaleX(0.9802);">6400</div>
<div class="t" style="top:819.69px;font-size:11px;line-height:13px;height:13px;right:220px;transform-origin:100% 50%;transform:scaleX(0.9125);">NC</div>
<div class="t" style="top:819.69px;font-size:11px;line-height:13px;height:13px;right:179px;transform-origin:100% 50%;transform:scaleX(0.9125);">NC</div>
<div class="t" style="top:819.69px;font-size:11px;line-height:13px;height:13px;right:127px;transform-origin:100% 50%;transform:scaleX(0.9125);">NC</div>
<div class="t" style="top:819.69px;font-size:11px;line-height:13px;height:13px;right:67px;transform-origin:100% 50%;transform:scaleX(1.0059);">1009.68</div>
<div class="t" style="top:819.69px;font-size:11px;line-height:13px;height:13px;left:1245px;transform:scaleX(0.8980);">4</div>
<div class="a" style="left:249px;top:838px;width:13px;height:13px;border:1px solid #2f5f80;background:linear-gradient(135deg,#dcdcd7,#fff)"><svg class="a" style="left:1px;top:1px" width="9" height="9"><path d="M1 3.5L3.5 6L8 1.5" stroke="#21a121" stroke-width="2" fill="none"/></svg></div>
<div class="a" style="left:276px;top:835.5px;width:18px;height:18px;background:radial-gradient(circle at 52% 50%,#fff 0,#f6d2bc 14%,#a86a52 28%,#3a1e16 44%,#0c0707 62%)"></div>
<div class="a" style="left:297px;top:838.5px;width:12px;height:12px;background:#fff"><i class="a" style="left:0;top:0;width:5px;height:5px;background:#22aa33"></i><i class="a" style="left:6px;top:0;width:6px;height:5px;background:#cc2222"></i><i class="a" style="left:0;top:6px;width:5px;height:6px;background:#2255dd"></i><i class="a" style="left:6px;top:6px;width:6px;height:6px;background:#22bb33"></i><i class="a" style="left:1.5px;top:8px;width:2.5px;height:2.5px;background:#bcd4ff"></i></div>
<div class="t" style="top:838.69px;font-size:11px;line-height:13px;height:13px;left:333px;transform:scaleX(0.9550);">IMG_0649.CR2</div>
<div class="t" style="top:838.69px;font-size:11px;line-height:13px;height:13px;left:476.5px;transform:scaleX(0.9813);">Изображение</div>
<div class="t" style="top:838.69px;font-size:11px;line-height:13px;height:13px;left:566.5px;transform:scaleX(1.0204);">23.08.2014 20:50:03</div>
<div class="t" style="top:838.69px;font-size:11px;line-height:13px;height:13px;right:501.5px;transform-origin:100% 50%;">5202 x 3465</div>
<div class="t" style="top:838.69px;font-size:11px;line-height:13px;height:13px;left:823.5px;transform:scaleX(1.0679);">Да</div>
<div class="t" style="top:838.69px;font-size:11px;line-height:13px;height:13px;left:882.5px;transform:scaleX(0.9744);">Серое 16 бит</div>
<div class="t" style="top:838.69px;font-size:11px;line-height:13px;height:13px;right:262.5px;transform-origin:100% 50%;transform:scaleX(0.9802);">6400</div>
<div class="t" style="top:838.69px;font-size:11px;line-height:13px;height:13px;right:220px;transform-origin:100% 50%;transform:scaleX(0.9125);">NC</div>
<div class="t" style="top:838.69px;font-size:11px;line-height:13px;height:13px;right:179px;transform-origin:100% 50%;transform:scaleX(0.9125);">NC</div>
<div class="t" style="top:838.69px;font-size:11px;line-height:13px;height:13px;right:127px;transform-origin:100% 50%;transform:scaleX(0.9125);">NC</div>
<div class="t" style="top:838.69px;font-size:11px;line-height:13px;height:13px;right:67px;transform-origin:100% 50%;transform:scaleX(1.0269);">1011.40</div>
<div class="t" style="top:838.69px;font-size:11px;line-height:13px;height:13px;left:1245px;transform:scaleX(0.8980);">4</div>
<div class="a" style="left:249px;top:857px;width:13px;height:13px;border:1px solid #2f5f80;background:linear-gradient(135deg,#dcdcd7,#fff)"><svg class="a" style="left:1px;top:1px" width="9" height="9"><path d="M1 3.5L3.5 6L8 1.5" stroke="#21a121" stroke-width="2" fill="none"/></svg></div>
<div class="a" style="left:276px;top:854.5px;width:18px;height:18px;background:radial-gradient(circle at 52% 50%,#fff 0,#f6d2bc 14%,#a86a52 28%,#3a1e16 44%,#0c0707 62%)"></div>
<div class="a" style="left:297px;top:857.5px;width:12px;height:12px;background:#fff"><i class="a" style="left:0;top:0;width:5px;height:5px;background:#22aa33"></i><i class="a" style="left:6px;top:0;width:6px;height:5px;background:#cc2222"></i><i class="a" style="left:0;top:6px;width:5px;height:6px;background:#2255dd"></i><i class="a" style="left:6px;top:6px;width:6px;height:6px;background:#22bb33"></i><i class="a" style="left:1.5px;top:8px;width:2.5px;height:2.5px;background:#bcd4ff"></i></div>
<div class="t" style="top:857.69px;font-size:11px;line-height:13px;height:13px;left:333px;transform:scaleX(0.9765);">IMG_0656_опорный.CR2</div>
<div class="t" style="top:857.69px;font-size:11px;line-height:13px;height:13px;left:476.5px;transform:scaleX(0.9813);">Изображение</div>
<div class="t" style="top:857.69px;font-size:11px;line-height:13px;height:13px;left:566.5px;transform:scaleX(1.0204);">23.08.2014 20:51:28</div>
<div class="t" style="top:857.69px;font-size:11px;line-height:13px;height:13px;right:501.5px;transform-origin:100% 50%;">5202 x 3465</div>
<div class="t" style="top:857.69px;font-size:11px;line-height:13px;height:13px;left:823.5px;transform:scaleX(1.0679);">Да</div>
<div class="t" style="top:857.69px;font-size:11px;line-height:13px;height:13px;left:882.5px;transform:scaleX(0.9744);">Серое 16 бит</div>
<div class="t" style="top:857.69px;font-size:11px;line-height:13px;height:13px;right:262.5px;transform-origin:100% 50%;transform:scaleX(0.9802);">6400</div>
<div class="t" style="top:857.69px;font-size:11px;line-height:13px;height:13px;right:220px;transform-origin:100% 50%;transform:scaleX(0.9125);">NC</div>
<div class="t" style="top:857.69px;font-size:11px;line-height:13px;height:13px;right:179px;transform-origin:100% 50%;transform:scaleX(0.9125);">NC</div>
<div class="t" style="top:857.69px;font-size:11px;line-height:13px;height:13px;right:127px;transform-origin:100% 50%;transform:scaleX(0.9125);">NC</div>
<div class="t" style="top:857.69px;font-size:11px;line-height:13px;height:13px;right:67px;transform-origin:100% 50%;transform:scaleX(1.0102);">921.70</div>
<div class="t" style="top:857.69px;font-size:11px;line-height:13px;height:13px;left:1245px;transform:scaleX(0.8980);">5</div>
<div class="a" style="left:249px;top:876px;width:13px;height:13px;border:1px solid #2f5f80;background:linear-gradient(135deg,#dcdcd7,#fff)"><svg class="a" style="left:1px;top:1px" width="9" height="9"><path d="M1 3.5L3.5 6L8 1.5" stroke="#21a121" stroke-width="2" fill="none"/></svg></div>
<div class="a" style="left:276px;top:873.5px;width:18px;height:18px;background:radial-gradient(circle at 52% 50%,#fff 0,#f6d2bc 14%,#a86a52 28%,#3a1e16 44%,#0c0707 62%)"></div>
<div class="a" style="left:297px;top:876.5px;width:12px;height:12px;background:#fff"><i class="a" style="left:0;top:0;width:5px;height:5px;background:#22aa33"></i><i class="a" style="left:6px;top:0;width:6px;height:5px;background:#cc2222"></i><i class="a" style="left:0;top:6px;width:5px;height:6px;background:#2255dd"></i><i class="a" style="left:6px;top:6px;width:6px;height:6px;background:#22bb33"></i><i class="a" style="left:1.5px;top:8px;width:2.5px;height:2.5px;background:#bcd4ff"></i></div>
<div class="t" style="top:876.69px;font-size:11px;line-height:13px;height:13px;left:333px;transform:scaleX(0.9550);">IMG_0657.CR2</div>
<div class="t" style="top:876.69px;font-size:11px;line-height:13px;height:13px;left:476.5px;transform:scaleX(0.9813);">Изображение</div>
<div class="t" style="top:876.69px;font-size:11px;line-height:13px;height:13px;left:566.5px;transform:scaleX(1.0204);">23.08.2014 20:51:40</div>
<div class="t" style="top:876.69px;font-size:11px;line-height:13px;height:13px;right:501.5px;transform-origin:100% 50%;">5202 x 3465</div>
<div class="t" style="top:876.69px;font-size:11px;line-height:13px;height:13px;left:823.5px;transform:scaleX(1.0679);">Да</div>
<div class="t" style="top:876.69px;font-size:11px;line-height:13px;height:13px;left:882.5px;transform:scaleX(0.9744);">Серое 16 бит</div>
<div class="t" style="top:876.69px;font-size:11px;line-height:13px;height:13px;right:262.5px;transform-origin:100% 50%;transform:scaleX(0.9802);">6400</div>
<div class="t" style="top:876.69px;font-size:11px;line-height:13px;height:13px;right:220px;transform-origin:100% 50%;transform:scaleX(0.9125);">NC</div>
<div class="t" style="top:876.69px;font-size:11px;line-height:13px;height:13px;right:179px;transform-origin:100% 50%;transform:scaleX(0.9125);">NC</div>
<div class="t" style="top:876.69px;font-size:11px;line-height:13px;height:13px;right:127px;transform-origin:100% 50%;transform:scaleX(0.9125);">NC</div>
<div class="t" style="top:876.69px;font-size:11px;line-height:13px;height:13px;right:67px;transform-origin:100% 50%;transform:scaleX(1.0059);">1032.15</div>
<div class="t" style="top:876.69px;font-size:11px;line-height:13px;height:13px;left:1245px;transform:scaleX(0.8980);">4</div>
<div class="a" style="left:249px;top:895px;width:13px;height:13px;border:1px solid #2f5f80;background:linear-gradient(135deg,#dcdcd7,#fff)"><svg class="a" style="left:1px;top:1px" width="9" height="9"><path d="M1 3.5L3.5 6L8 1.5" stroke="#21a121" stroke-width="2" fill="none"/></svg></div>
<div class="a" style="left:276px;top:892.5px;width:18px;height:18px;background:radial-gradient(circle at 52% 50%,#fff 0,#f6d2bc 14%,#a86a52 28%,#3a1e16 44%,#0c0707 62%)"></div>
<div class="a" style="left:297px;top:895.5px;width:12px;height:12px;background:#fff"><i class="a" style="left:0;top:0;width:5px;height:5px;background:#22aa33"></i><i class="a" style="left:6px;top:0;width:6px;height:5px;background:#cc2222"></i><i class="a" style="left:0;top:6px;width:5px;height:6px;background:#2255dd"></i><i class="a" style="left:6px;top:6px;width:6px;height:6px;background:#22bb33"></i><i class="a" style="left:1.5px;top:8px;width:2.5px;height:2.5px;background:#bcd4ff"></i></div>
<div class="t" style="top:895.69px;font-size:11px;line-height:13px;height:13px;left:333px;transform:scaleX(0.9550);">IMG_0663.CR2</div>
<div class="t" style="top:895.69px;font-size:11px;line-height:13px;height:13px;left:476.5px;transform:scaleX(0.9813);">Изображение</div>
<div class="t" style="top:895.69px;font-size:11px;line-height:13px;height:13px;left:566.5px;transform:scaleX(1.0204);">23.08.2014 20:52:53</div>
<div class="t" style="top:895.69px;font-size:11px;line-height:13px;height:13px;right:501.5px;transform-origin:100% 50%;">5202 x 3465</div>
<div class="t" style="top:895.69px;font-size:11px;line-height:13px;height:13px;left:823.5px;transform:scaleX(1.0679);">Да</div>
<div class="t" style="top:895.69px;font-size:11px;line-height:13px;height:13px;left:882.5px;transform:scaleX(0.9744);">Серое 16 бит</div>
<div class="t" style="top:895.69px;font-size:11px;line-height:13px;height:13px;right:262.5px;transform-origin:100% 50%;transform:scaleX(0.9802);">6400</div>
<div class="t" style="top:895.69px;font-size:11px;line-height:13px;height:13px;right:220px;transform-origin:100% 50%;transform:scaleX(0.9125);">NC</div>
<div class="t" style="top:895.69px;font-size:11px;line-height:13px;height:13px;right:179px;transform-origin:100% 50%;transform:scaleX(0.9125);">NC</div>
<div class="t" style="top:895.69px;font-size:11px;line-height:13px;height:13px;right:127px;transform-origin:100% 50%;transform:scaleX(0.9125);">NC</div>
<div class="t" style="top:895.69px;font-size:11px;line-height:13px;height:13px;right:67px;transform-origin:100% 50%;transform:scaleX(1.0102);">977.04</div>
<div class="t" style="top:895.69px;font-size:11px;line-height:13px;height:13px;left:1245px;transform:scaleX(0.8980);">4</div>
<div class="a" style="left:249px;top:914px;width:13px;height:13px;border:1px solid #2f5f80;background:linear-gradient(135deg,#dcdcd7,#fff)"><svg class="a" style="left:1px;top:1px" width="9" height="9"><path d="M1 3.5L3.5 6L8 1.5" stroke="#21a121" stroke-width="2" fill="none"/></svg></div>
<div class="a" style="left:276px;top:911.5px;width:18px;height:18px;background:radial-gradient(circle at 52% 50%,#fff 0,#f6d2bc 14%,#a86a52 28%,#3a1e16 44%,#0c0707 62%)"></div>
<div class="a" style="left:297px;top:914.5px;width:12px;height:12px;background:#fff"><i class="a" style="left:0;top:0;width:5px;height:5px;background:#22aa33"></i><i class="a" style="left:6px;top:0;width:6px;height:5px;background:#cc2222"></i><i class="a" style="left:0;top:6px;width:5px;height:6px;background:#2255dd"></i><i class="a" style="left:6px;top:6px;width:6px;height:6px;background:#22bb33"></i><i class="a" style="left:1.5px;top:8px;width:2.5px;height:2.5px;background:#bcd4ff"></i></div>
<div class="t" style="top:914.69px;font-size:11px;line-height:13px;height:13px;left:333px;transform:scaleX(0.9550);">IMG_0664.CR2</div>
<div class="t" style="top:914.69px;font-size:11px;line-height:13px;height:13px;left:476.5px;transform:scaleX(0.9813);">Изображение</div>
<div class="t" style="top:914.69px;font-size:11px;line-height:13px;height:13px;left:566.5px;transform:scaleX(1.0204);">23.08.2014 20:53:05</div>
<div class="t" style="top:914.69px;font-size:11px;line-height:13px;height:13px;right:501.5px;transform-origin:100% 50%;">5202 x 3465</div>
<div class="t" style="top:914.69px;font-size:11px;line-height:13px;height:13px;left:823.5px;transform:scaleX(1.0679);">Да</div>
<div class="t" style="top:914.69px;font-size:11px;line-height:13px;height:13px;left:882.5px;transform:scaleX(0.9744);">Серое 16 бит</div>
<div class="t" style="top:914.69px;font-size:11px;line-height:13px;height:13px;right:262.5px;transform-origin:100% 50%;transform:scaleX(0.9802);">6400</div>
<div class="t" style="top:914.69px;font-size:11px;line-height:13px;height:13px;right:220px;transform-origin:100% 50%;transform:scaleX(0.9125);">NC</div>
<div class="t" style="top:914.69px;font-size:11px;line-height:13px;height:13px;right:179px;transform-origin:100% 50%;transform:scaleX(0.9125);">NC</div>
<div class="t" style="top:914.69px;font-size:11px;line-height:13px;height:13px;right:127px;transform-origin:100% 50%;transform:scaleX(0.9125);">NC</div>
<div class="t" style="top:914.69px;font-size:11px;line-height:13px;height:13px;right:67px;transform-origin:100% 50%;transform:scaleX(1.0102);">864.71</div>
<div class="t" style="top:914.69px;font-size:11px;line-height:13px;height:13px;left:1245px;transform:scaleX(0.8980);">4</div>
<div class="a" style="left:249px;top:933px;width:13px;height:13px;border:1px solid #2f5f80;background:linear-gradient(135deg,#dcdcd7,#fff)"><svg class="a" style="left:1px;top:1px" width="9" height="9"><path d="M1 3.5L3.5 6L8 1.5" stroke="#21a121" stroke-width="2" fill="none"/></svg></div>
<div class="a" style="left:276px;top:930.5px;width:18px;height:18px;background:radial-gradient(circle at 52% 50%,#fff 0,#f6d2bc 14%,#a86a52 28%,#3a1e16 44%,#0c0707 62%)"></div>
<div class="a" style="left:297px;top:933.5px;width:12px;height:12px;background:#fff"><i class="a" style="left:0;top:0;width:5px;height:5px;background:#22aa33"></i><i class="a" style="left:6px;top:0;width:6px;height:5px;background:#cc2222"></i><i class="a" style="left:0;top:6px;width:5px;height:6px;background:#2255dd"></i><i class="a" style="left:6px;top:6px;width:6px;height:6px;background:#22bb33"></i><i class="a" style="left:1.5px;top:8px;width:2.5px;height:2.5px;background:#bcd4ff"></i></div>
<div class="t" style="top:933.69px;font-size:11px;line-height:13px;height:13px;left:333px;transform:scaleX(0.9550);">IMG_0665.CR2</div>
<div class="t" style="top:933.69px;font-size:11px;line-height:13px;height:13px;left:476.5px;transform:scaleX(0.9813);">Изображение</div>
<div class="t" style="top:933.69px;font-size:11px;line-height:13px;height:13px;left:566.5px;transform:scaleX(1.0204);">23.08.2014 20:53:17</div>
<div class="t" style="top:933.69px;font-size:11px;line-height:13px;height:13px;right:501.5px;transform-origin:100% 50%;">5202 x 3465</div>
<div class="t" style="top:933.69px;font-size:11px;line-height:13px;height:13px;left:823.5px;transform:scaleX(1.0679);">Да</div>
<div class="t" style="top:933.69px;font-size:11px;line-height:13px;height:13px;left:882.5px;transform:scaleX(0.9744);">Серое 16 бит</div>
<div class="t" style="top:933.69px;font-size:11px;line-height:13px;height:13px;right:262.5px;transform-origin:100% 50%;transform:scaleX(0.9802);">6400</div>
<div class="t" style="top:933.69px;font-size:11px;line-height:13px;height:13px;right:220px;transform-origin:100% 50%;transform:scaleX(0.9125);">NC</div>
<div class="t" style="top:933.69px;font-size:11px;line-height:13px;height:13px;right:179px;transform-origin:100% 50%;transform:scaleX(0.9125);">NC</div>
<div class="t" style="top:933.69px;font-size:11px;line-height:13px;height:13px;right:127px;transform-origin:100% 50%;transform:scaleX(0.9125);">NC</div>
<div class="t" style="top:933.69px;font-size:11px;line-height:13px;height:13px;right:67px;transform-origin:100% 50%;transform:scaleX(1.0059);">1024.43</div>
<div class="t" style="top:933.69px;font-size:11px;line-height:13px;height:13px;left:1245px;transform:scaleX(0.8980);">4</div>
<div class="a" style="left:276px;top:949px;width:18px;height:4px;background:#0a0606"></div>
<div class="a" style="left:1251px;top:739px;width:17px;height:214px;background:#f8f8f4"></div>
<div class="a" style="left:1252px;top:740px;width:14px;height:16px;border:1px solid #b4c8f6;border-radius:3px;background:linear-gradient(135deg,#d8e4fd,#b8cdfb)"><svg class="a" style="left:-2.5px;top:-1.5px" width="17" height="17"><path d="M4 9L8 5L12 9" stroke="#4d6185" stroke-width="2" fill="none"/></svg></div>
<div class="a" style="left:1252px;top:936px;width:14px;height:16px;border:1px solid #b4c8f6;border-radius:3px;background:linear-gradient(135deg,#d8e4fd,#b8cdfb)"><svg class="a" style="left:-2.5px;top:-1.5px" width="17" height="17"><path d="M4 6L8 10L12 6" stroke="#4d6185" stroke-width="2" fill="none"/></svg></div>
<div class="a" style="left:1252px;top:843px;width:14px;height:8px;border:1px solid #b4c8f6;border-radius:2px;background:linear-gradient(90deg,#d0defd,#b8cdfb)"></div>
<div class="a" style="left:232px;top:953px;width:1018px;height:16px;background:#f6f6f2"></div>
<div class="a" style="left:233px;top:953px;width:16px;height:16px;border:1px solid #b4c8f6;border-radius:3px;background:linear-gradient(135deg,#d8e4fd,#b8cdfb)"><svg class="a" style="left:-1.5px;top:-1.5px" width="17" height="17"><path d="M9 4L5 8L9 12" stroke="#4d6185" stroke-width="2" fill="none"/></svg></div>
<div class="a" style="left:1233px;top:953px;width:16px;height:16px;border:1px solid #b4c8f6;border-radius:3px;background:linear-gradient(135deg,#d8e4fd,#b8cdfb)"><svg class="a" style="left:-1.5px;top:-1.5px" width="17" height="17"><path d="M6 4L10 8L6 12" stroke="#4d6185" stroke-width="2" fill="none"/></svg></div>
<div class="a" style="left:250px;top:954px;width:822px;height:14px;border:1px solid #a9bdf0;border-radius:2px;background:linear-gradient(#c9d9fd,#bfd1fc 50%,#b0c6f8)"></div>
<div class="a" style="left:656px;top:957px;width:9px;height:8px;background:repeating-linear-gradient(90deg,#eef4fe 0 1px,#8ba0d8 1px 2px)"></div>
<svg class="a" style="left:228px;top:970px" width="180" height="20"><path d="M0 1 L180 1" stroke="#000" stroke-width="1"/><path d="M3 1 L10 16.5 L97 16.5 L103 1Z" fill="#fff" stroke="none"/><path d="M3 1 L10 16.5 L97 16.5 L103 1" fill="none" stroke="#000" stroke-width="1.2"/><path d="M99 16.5 L153 16.5 L160 1" fill="none" stroke="#000" stroke-width="1.2"/></svg>
<div class="t" style="top:973.03px;font-size:10px;line-height:12px;height:12px;left:241.5px;transform:scaleX(1.0222);font-weight:bold;">Главная группа</div>
<div class="t" style="top:973.71px;font-size:9.5px;line-height:11px;height:11px;left:337.5px;transform:scaleX(0.9199);">Группа 1</div>
<div class="a" style="left:0px;top:991px;width:1280px;height:2px;background:linear-gradient(#c3cbf2,#e6eaf8)"></div>
<div class="a" style="left:0px;top:993px;width:1280px;height:7px;background:linear-gradient(#4a8cf4,#2a62dc 2px,#245adc)"></div>
<div class="a" style="left:0px;top:993px;width:92px;height:7px;background:linear-gradient(#6ab86a,#3a983a 2px,#2f8f2f);border-radius:0 6px 0 0"></div>
<div class="a" style="left:208px;top:994px;width:127px;height:6px;background:#3c82f0;border-radius:2px 2px 0 0"></div>
<div class="a" style="left:338px;top:994px;width:127px;height:6px;background:#3c82f0;border-radius:2px 2px 0 0"></div>
<div class="a" style="left:468px;top:994px;width:127px;height:6px;background:#3c82f0;border-radius:2px 2px 0 0"></div>
<div class="a" style="left:598px;top:994px;width:127px;height:6px;background:#3c82f0;border-radius:2px 2px 0 0"></div>
<div class="a" style="left:728px;top:994px;width:127px;height:6px;background:#3c82f0;border-radius:2px 2px 0 0"></div>
<div class="a" style="left:858px;top:994px;width:127px;height:6px;background:#3c82f0;border-radius:2px 2px 0 0"></div>
<div class="a" style="left:987px;top:994px;width:133px;height:6px;background:#1c4cba;border-radius:2px 2px 0 0"></div>
<div class="a" style="left:1188px;top:993px;width:92px;height:7px;background:linear-gradient(#4ab8f8,#1a9ae8 2px,#1890e4)"></div>
<div class="a" style="left:395px;top:296px;width:491px;height:402px;background:#ece9d8;border:3px solid #0831d0;border-top:0;border-radius:7px 7px 0 0"></div>
<div class="a" style="left:395px;top:296px;width:491px;height:29px;border-radius:7px 7px 0 0;background:linear-gradient(#3a8cf4 0,#0a62e4 12%,#0556dc 35%,#0558e4 70%,#0a62ee 88%,#064ccc 100%)"></div>
<div class="t" style="top:304.65px;font-size:14px;line-height:17px;height:17px;left:401px;transform:scaleX(0.9336);color:#fff;font-weight:bold;text-shadow:1px 1px 0 #0a2a90;">Параметры сложения</div>
<div class="a" style="left:860px;top:301px;width:21px;height:21px;border:1px solid #fff;border-radius:3px;background:linear-gradient(135deg,#e8805a,#d4462a 50%,#b8321c)"><svg class="a" style="left:3px;top:3px" width="13" height="13"><path d="M2 2L11 11M11 2L2 11" stroke="#fff" stroke-width="2.3"/></svg></div>
<div class="a" style="left:404px;top:352px;width:468px;height:247px;background:#fcfcfe;border:1px solid #919b9c"></div>
<div class="a" style="left:406px;top:334px;width:63px;height:19px;background:linear-gradient(#fff,#f4f3ee 70%,#e8e6dc);border:1px solid #919b9c;border-bottom:0;border-radius:3px 3px 0 0"></div>
<div class="t" style="top:337.69px;font-size:11px;line-height:13px;height:13px;left:412px;transform:scaleX(1.0294);">Результат</div>
<div class="a" style="left:524px;top:334px;width:80px;height:19px;background:linear-gradient(#fff,#f4f3ee 70%,#e8e6dc);border:1px solid #919b9c;border-bottom:0;border-radius:3px 3px 0 0"></div>
<div class="t" style="top:337.69px;font-size:11px;line-height:13px;height:13px;left:530px;transform:scaleX(1.0246);">Изображение</div>
<div class="a" style="left:605px;top:334px;width:40px;height:19px;background:linear-gradient(#fff,#f4f3ee 70%,#e8e6dc);border:1px solid #919b9c;border-bottom:0;border-radius:3px 3px 0 0"></div>
<div class="t" style="top:337.69px;font-size:11px;line-height:13px;height:13px;left:611px;transform:scaleX(1.0330);">Dark</div>
<div class="a" style="left:646px;top:334px;width:41px;height:19px;background:linear-gradient(#fff,#f4f3ee 70%,#e8e6dc);border:1px solid #919b9c;border-bottom:0;border-radius:3px 3px 0 0"></div>
<div class="t" style="top:337.69px;font-size:11px;line-height:13px;height:13px;left:652px;transform:scaleX(0.9813);">Flat</div>
<div class="a" style="left:688px;top:334px;width:65px;height:19px;background:linear-gradient(#fff,#f4f3ee 70%,#e8e6dc);border:1px solid #919b9c;border-bottom:0;border-radius:3px 3px 0 0"></div>
<div class="t" style="top:337.69px;font-size:11px;line-height:13px;height:13px;left:694px;transform:scaleX(1.0073);">Bias/Offset</div>
<div class="a" style="left:754px;top:334px;width:85px;height:19px;background:linear-gradient(#fff,#f4f3ee 70%,#e8e6dc);border:1px solid #919b9c;border-bottom:0;border-radius:3px 3px 0 0"></div>
<div class="t" style="top:337.69px;font-size:11px;line-height:13px;height:13px;left:760px;transform:scaleX(0.9905);">Выравнивание</div>
<div class="a" style="left:467px;top:332px;width:58px;height:21px;background:#fcfcfe;border:1px solid #919b9c;border-bottom:0;border-radius:3px 3px 0 0;border-top:2px solid #e5a028"></div>
<div class="t" style="top:335.69px;font-size:11px;line-height:13px;height:13px;left:477px;transform:scaleX(1.0052);">Кометы</div>
<div class="a" style="left:841px;top:335px;width:31px;height:14px;background:#c6d3f7;border-radius:2px"></div>
<svg class="a" style="left:841px;top:335px" width="31" height="14"><path d="M10.5 3L6.5 6.5L10.5 10ZM20.5 3L24.5 6.5L20.5 10Z" fill="#3c5088"/></svg>
<div class="a" style="left:412px;top:365px;width:448px;height:13px;background:linear-gradient(90deg,#f4f8fe 0,#d6e6fa 30%,#a9c9f4 65%,#8ab4ee 100%)"></div>
<div class="t" style="top:365.69px;font-size:11px;line-height:13px;height:13px;left:419px;transform:scaleX(1.0155);">Кометные параметры сложения</div>
<div class="a" style="left:419px;top:391px;width:13px;height:13px;border-radius:50%;border:1px solid #55788c;background:radial-gradient(circle at 65% 65%,#fff 30%,#dcdcd4)"><i class="a" style="left:3px;top:3px;width:5px;height:5px;border-radius:50%;background:radial-gradient(#55d551,#21a121)"></i></div>
<div class="a" style="left:419px;top:457px;width:13px;height:13px;border-radius:50%;border:1px solid #55788c;background:radial-gradient(circle at 65% 65%,#fff 30%,#dcdcd4)"></div>
<div class="a" style="left:419px;top:524.5px;width:13px;height:13px;border-radius:50%;border:1px solid #55788c;background:radial-gradient(circle at 65% 65%,#fff 30%,#dcdcd4)"></div>
<div class="t" style="top:391.69px;font-size:11px;line-height:13px;height:13px;left:434.8px;transform:scaleX(0.9815);">Стандартное сложение</div>
<div class="t" style="top:409.69px;font-size:11px;line-height:13px;height:13px;left:433.8px;transform:scaleX(1.0045);">Положение кометы игнорируется.</div>
<div class="t" style="top:422.69px;font-size:11px;line-height:13px;height:13px;left:433.8px;transform:scaleX(1.0055);">Комета будет смазана.</div>
<div class="t" style="top:457.69px;font-size:11px;line-height:13px;height:13px;left:434.8px;transform:scaleX(0.9963);">Сложение по комете</div>
<div class="t" style="top:474.69px;font-size:11px;line-height:13px;height:13px;left:433.8px;transform:scaleX(1.0135);">Положение кометы используется.</div>
<div class="t" style="top:487.69px;font-size:11px;line-height:13px;height:13px;left:433.8px;transform:scaleX(1.0060);">Комета будет чёткой, звёзды будут</div>
<div class="t" style="top:500.69px;font-size:11px;line-height:13px;height:13px;left:433.8px;transform:scaleX(0.9767);">в виде треков.</div>
<div class="t" style="top:524.69px;font-size:11px;line-height:13px;height:13px;left:434.8px;transform:scaleX(1.0104);">Сложение по звёздам + комете</div>
<div class="t" style="top:543.69px;font-size:11px;line-height:13px;height:13px;left:433.8px;transform:scaleX(1.0135);">Положение кометы используется.</div>
<div class="t" style="top:556.69px;font-size:11px;line-height:13px;height:13px;left:433.8px;transform:scaleX(1.0387);">Комета и звёзды будут чёткими.</div>
<div class="t" style="top:569.69px;font-size:11px;line-height:13px;height:13px;left:433.8px;transform:scaleX(0.9757);">Процесс пройдёт вдвое дольше.</div>
<div class="a" style="left:634px;top:393px;width:224px;height:186px;background:#171717;overflow:hidden">
<svg class="a" style="left:0;top:0" width="224" height="186"><defs><radialGradient id="ch"><stop offset="0" stop-color="#fff"/><stop offset=".45" stop-color="#fff" stop-opacity=".97"/><stop offset=".68" stop-color="#ddd" stop-opacity=".55"/><stop offset="1" stop-color="#888" stop-opacity="0"/></radialGradient><linearGradient id="ct" x1="0" y1="0" x2="1" y2="0"><stop offset="0" stop-color="#ddd" stop-opacity=".8"/><stop offset=".22" stop-color="#aaa" stop-opacity=".38"/><stop offset=".6" stop-color="#888" stop-opacity=".16"/><stop offset="1" stop-color="#666" stop-opacity="0"/></linearGradient><filter id="bl" x="-20%" y="-100%" width="140%" height="300%"><feGaussianBlur stdDeviation="3"/></filter><filter id="sb"><feGaussianBlur stdDeviation=".45"/></filter></defs><g filter="url(#sb)"><circle cx="140" cy="138" r="1.3" fill="#fff" opacity="0.22"/><circle cx="104" cy="175" r="0.7" fill="#fff" opacity="0.74"/><circle cx="25" cy="87" r="0.8" fill="#fff" opacity="0.43"/><circle cx="23" cy="46" r="0.8" fill="#fff" opacity="0.44"/><circle cx="41" cy="161" r="1.1" fill="#fff" opacity="0.30"/><circle cx="179" cy="26" r="1.3" fill="#fff" opacity="0.47"/><circle cx="30" cy="181" r="0.7" fill="#fff" opacity="0.33"/><circle cx="48" cy="183" r="0.8" fill="#fff" opacity="0.37"/><circle cx="215" cy="100" r="0.8" fill="#fff" opacity="0.31"/><circle cx="217" cy="37" r="1.1" fill="#fff" opacity="0.38"/><circle cx="81" cy="31" r="0.8" fill="#fff" opacity="0.36"/><circle cx="74" cy="152" r="1.3" fill="#fff" opacity="0.20"/><circle cx="152" cy="63" r="0.9" fill="#fff" opacity="0.41"/><circle cx="69" cy="130" r="0.8" fill="#fff" opacity="0.49"/><circle cx="158" cy="11" r="0.7" fill="#fff" opacity="0.77"/><circle cx="80" cy="75" r="1.3" fill="#fff" opacity="0.67"/><circle cx="82" cy="108" r="0.7" fill="#fff" opacity="0.47"/><circle cx="159" cy="116" r="0.8" fill="#fff" opacity="0.27"/><circle cx="55" cy="152" r="1.1" fill="#fff" opacity="0.41"/><circle cx="79" cy="98" r="1.1" fill="#fff" opacity="0.26"/><circle cx="168" cy="148" r="0.9" fill="#fff" opacity="0.22"/><circle cx="212" cy="17" r="0.9" fill="#fff" opacity="0.51"/><circle cx="81" cy="28" r="0.9" fill="#fff" opacity="0.75"/><circle cx="122" cy="58" r="0.9" fill="#fff" opacity="0.38"/><circle cx="179" cy="117" r="0.9" fill="#fff" opacity="0.80"/><circle cx="36" cy="9" r="1.3" fill="#fff" opacity="0.52"/><circle cx="91" cy="44" r="1.3" fill="#fff" opacity="0.41"/><circle cx="56" cy="121" r="0.8" fill="#fff" opacity="0.23"/><circle cx="205" cy="6" r="1.1" fill="#fff" opacity="0.40"/><circle cx="46" cy="183" r="1.3" fill="#fff" opacity="0.77"/><circle cx="141" cy="147" r="0.7" fill="#fff" opacity="0.30"/><circle cx="84" cy="11" r="1.1" fill="#fff" opacity="0.38"/><circle cx="102" cy="186" r="0.8" fill="#fff" opacity="0.79"/><circle cx="102" cy="91" r="0.9" fill="#fff" opacity="0.49"/><circle cx="65" cy="75" r="0.8" fill="#fff" opacity="0.27"/><circle cx="184" cy="99" r="0.8" fill="#fff" opacity="0.58"/><circle cx="112" cy="63" r="0.7" fill="#fff" opacity="0.50"/><circle cx="115" cy="102" r="1.3" fill="#fff" opacity="0.42"/><circle cx="176" cy="144" r="1.3" fill="#fff" opacity="0.60"/><circle cx="170" cy="68" r="0.9" fill="#fff" opacity="0.70"/><circle cx="59" cy="182" r="0.9" fill="#fff" opacity="0.77"/><circle cx="76" cy="33" r="0.7" fill="#fff" opacity="0.48"/><circle cx="173" cy="61" r="0.9" fill="#fff" opacity="0.48"/><circle cx="183" cy="120" r="0.9" fill="#fff" opacity="0.41"/><circle cx="144" cy="137" r="1.1" fill="#fff" opacity="0.41"/><circle cx="189" cy="162" r="1.1" fill="#fff" opacity="0.79"/><circle cx="214" cy="96" r="1.3" fill="#fff" opacity="0.79"/><circle cx="44" cy="67" r="1.1" fill="#fff" opacity="0.37"/><circle cx="18" cy="125" r="1.1" fill="#fff" opacity="0.30"/><circle cx="175" cy="108" r="1.1" fill="#fff" opacity="0.38"/><circle cx="124" cy="161" r="0.9" fill="#fff" opacity="0.63"/><circle cx="6" cy="30" r="1.1" fill="#fff" opacity="0.57"/><circle cx="40" cy="141" r="0.8" fill="#fff" opacity="0.58"/><circle cx="9" cy="88" r="0.8" fill="#fff" opacity="0.30"/><circle cx="200" cy="21" r="0.8" fill="#fff" opacity="0.49"/><circle cx="123" cy="77" r="0.9" fill="#fff" opacity="0.43"/><circle cx="137" cy="110" r="0.8" fill="#fff" opacity="0.63"/><circle cx="84" cy="65" r="0.9" fill="#fff" opacity="0.71"/><circle cx="194" cy="128" r="1.3" fill="#fff" opacity="0.42"/><circle cx="8" cy="114" r="0.7" fill="#fff" opacity="0.38"/><circle cx="115" cy="177" r="0.9" fill="#fff" opacity="0.77"/><circle cx="183" cy="78" r="1.3" fill="#fff" opacity="0.59"/><circle cx="83" cy="26" r="1.3" fill="#fff" opacity="0.43"/><circle cx="107" cy="37" r="0.8" fill="#fff" opacity="0.57"/><circle cx="79" cy="166" r="0.7" fill="#fff" opacity="0.43"/><circle cx="73" cy="170" r="1.3" fill="#fff" opacity="0.28"/><circle cx="141" cy="166" r="1.1" fill="#fff" opacity="0.46"/><circle cx="219" cy="92" r="1.1" fill="#fff" opacity="0.78"/><circle cx="85" cy="179" r="0.8" fill="#fff" opacity="0.56"/><circle cx="58" cy="182" r="1.1" fill="#fff" opacity="0.35"/></g><g transform="translate(30,148) rotate(-33)"><path d="M0 -4 L165 -13 L165 13 L0 4Z" fill="url(#ct)" filter="url(#bl)"/></g><circle cx="30" cy="148" r="19" fill="url(#ch)"/></svg>
</div>
<div class="t" style="top:613.69px;font-size:11px;line-height:13px;height:13px;left:413.5px;transform:scaleX(0.9911);">Каталог временных файлов:</div>
<div class="t" style="top:613.69px;font-size:11px;line-height:13px;height:13px;left:568px;transform:scaleX(0.9813);">C:\DOCUME~1\C243~1\LOCALS~1\Temp\</div>
<div class="a" style="left:849px;top:609px;width:22px;height:22px;border:1px solid #003c74;border-radius:3px;background:linear-gradient(#fff,#f3f2ea 60%,#d9d6c6)"></div>
<div class="t" style="top:614.19px;font-size:11px;line-height:13px;height:13px;left:856px;transform:scaleX(0.8722);">...</div>
<div class="a" style="left:798px;top:636px;width:73px;height:21px;border:1px solid #003c74;border-radius:3px;background:linear-gradient(#fff,#f3f2ea 60%,#d9d6c6)"></div>
<div class="t" style="top:640.69px;font-size:11px;line-height:13px;height:13px;left:816px;transform:scaleX(0.9375);">Отмена</div>
<div class="a" style="left:798px;top:662px;width:73px;height:21px;border:1px solid #003c74;border-radius:3px;background:linear-gradient(#fff,#f3f2ea 60%,#d9d6c6);box-shadow:inset 0 0 0 2px #a9c0f0"></div>
<div class="t" style="top:666.69px;font-size:11px;line-height:13px;height:13px;left:827px;transform:scaleX(0.9430);">OK</div>
<div class="a" style="left:409px;top:648px;width:13px;height:13px;border:1px solid #2f5f80;background:linear-gradient(135deg,#dcdcd7,#fff)"></div>
<div class="a" style="left:409px;top:669px;width:13px;height:13px;border:1px solid #2f5f80;background:linear-gradient(135deg,#dcdcd7,#fff)"><svg class="a" style="left:1px;top:1px" width="9" height="9"><path d="M1 3.5L3.5 6L8 1.5" stroke="#21a121" stroke-width="2" fill="none"/></svg></div>
<div class="t" style="top:648.69px;font-size:11px;line-height:13px;height:13px;left:424.5px;transform:scaleX(0.9902);">Уменьшить приоритет CPU при обработке</div>
<div class="t" style="top:669.69px;font-size:11px;line-height:13px;height:13px;left:424.5px;transform:scaleX(0.9841);">Использовать все доступные CPU</div>
<svg class="a" style="left:480px;top:272px" width="34" height="68"><path d="M10 2 L23.5 2 L23.5 38 L28 38 L16.5 66 L5 38 L10 38Z" fill="#f20d0d"/></svg>
<svg class="a" style="left:347px;top:384px" width="72" height="28"><path d="M69 13.5 L38 2 L38 7.5 L2 7.5 L2 19.5 L38 19.5 L38 25 Z" fill="#f20d0d"/></svg>
<svg class="a" style="left:859px;top:658px" width="70" height="28"><path d="M2 14 L31 2 L31 8 L67 8 L67 20 L31 20 L31 26 Z" fill="#f20d0d"/></svg>
</body></html>
